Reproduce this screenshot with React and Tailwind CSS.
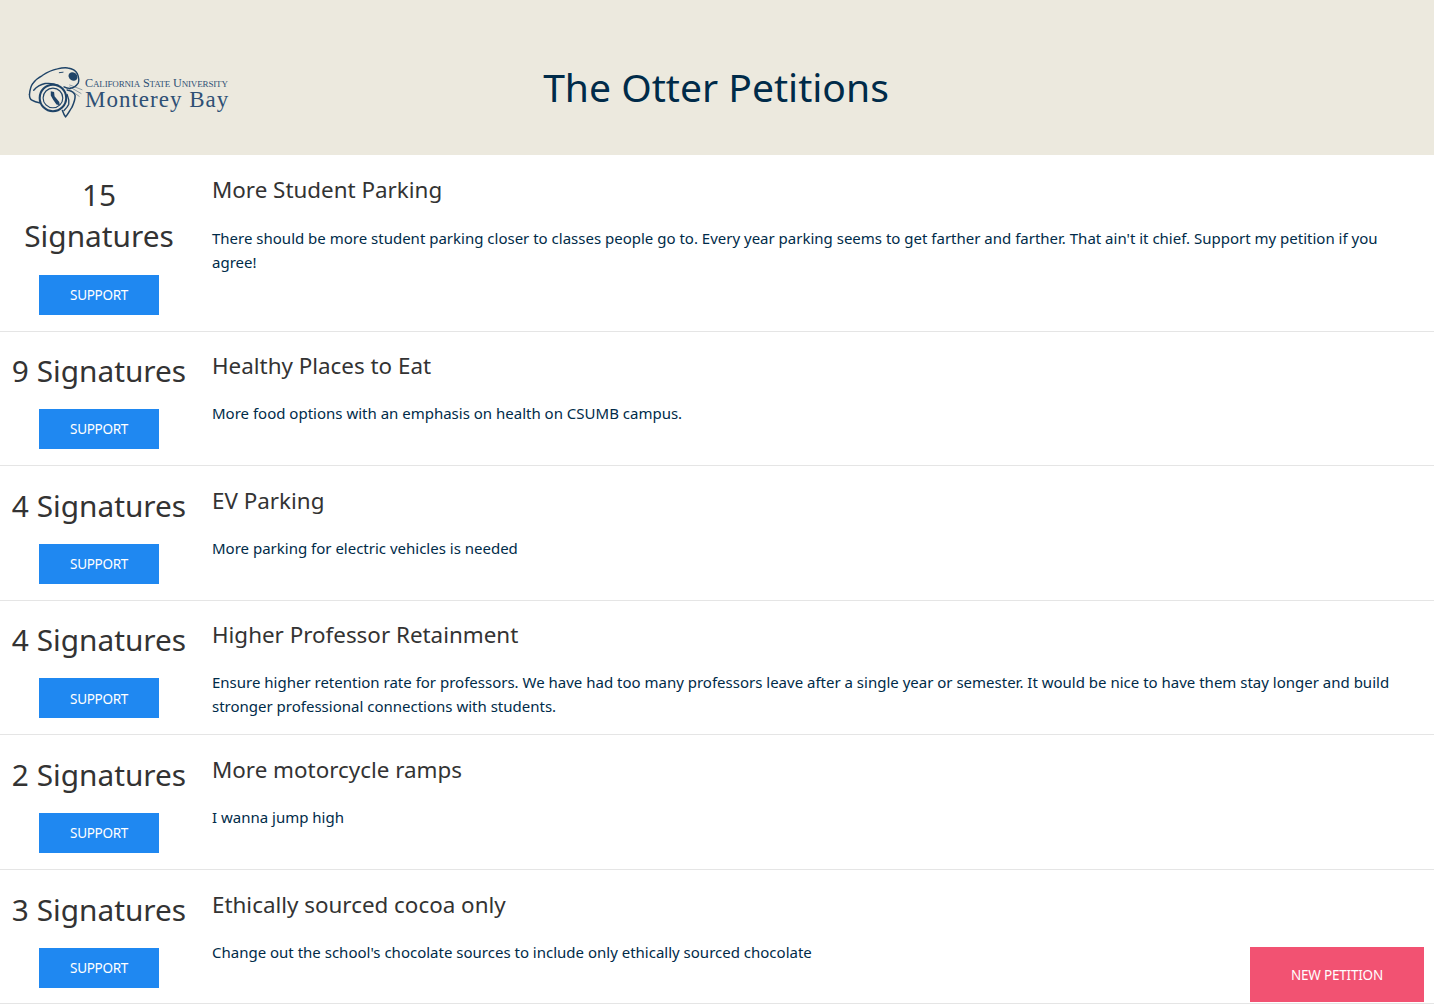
const petitions = [
  { count: '15', title: 'More Student Parking', body: "There should be more student parking closer to classes people go to. Every year parking seems to get farther and farther. That ain't it chief. Support my petition if you agree!", stack: true },
  { count: '9', title: 'Healthy Places to Eat', body: 'More food options with an emphasis on health on CSUMB campus.' },
  { count: '4', title: 'EV Parking', body: 'More parking for electric vehicles is needed' },
  { count: '4', title: 'Higher Professor Retainment', body: 'Ensure higher retention rate for professors. We have had too many professors leave after a single year or semester. It would be nice to have them stay longer and build stronger professional connections with students.' },
  { count: '2', title: 'More motorcycle ramps', body: 'I wanna jump high' },
  { count: '3', title: 'Ethically sourced cocoa only', body: "Change out the school's chocolate sources to include only ethically sourced chocolate" },
];

const Logo = () => (
  <div className="flex items-center">
    <svg className="ml-[2px] mt-[2px]" width="55" height="53" viewBox="0 0 58 56" fill="none" stroke="#1f4468" strokeLinecap="round" strokeLinejoin="round">
      <path d="M1.5 29C2 24 3 20 5 17.5C8 13 11 11 15 9C21 5 26 3 31 2C35 1 39 .5 42 1C46 1.5 50 3 52 7C53.5 10 54 14 53 17C51 20 48 22 45 22.5C42 23 40 22 38 21" strokeWidth="1.5" />
      <path d="M1.5 29C1.5 32 2 34 4 35C7 37 10 37.5 13 38M6 24.5C9 21 13 18.5 18 17.5C23 17 28 17.5 32 19.5" strokeWidth="1.5" />
      <ellipse cx="47.5" cy="10" rx="5" ry="4.2" fill="#1f4468" stroke="none" transform="rotate(35 47.5 10)" />
      <path d="M33 6L37 5.5" strokeWidth="1" />
      <path d="M44 19L57 24M44 21L56 28M43 23L54 31" strokeWidth="0.5" />
      <circle cx="26.3" cy="32.7" r="14" strokeWidth="2.2" />
      <circle cx="26.3" cy="32.7" r="10.4" strokeWidth="1.2" />
      <path d="M24 25.5L27.5 26.5L28 31L33 37L33.5 40.5L30 39.5L26.5 34.5L24 30Z" fill="#1f4468" stroke="none" />
      <path d="M41.3 24.3C45 25 49 27 49.7 30C50 35 48 39 46.3 42.7C44 46 42 50 39.7 52.7C38 51 37 48 36.3 46" strokeWidth="1.6" />
      <path d="M41.3 29C43 33 43.5 36 43 39.3C42 42 40 44 38 46" strokeWidth="1.4" />
    </svg>
    <div className="ml-[2px] mt-[1px] text-[#2f5075] font-['Liberation_Serif',serif]">
      <div className="text-[12.2px] leading-[12px] whitespace-nowrap [font-variant:small-caps] tracking-[-0.16px]">California State University</div>
      <div className="text-[23px] leading-[21px] whitespace-nowrap tracking-[1px]">Monterey Bay</div>
    </div>
  </div>
);

const Row = ({ count, title, body, stack }) => (
  <div className={`flex border-b border-[#e5e5e5] ${stack ? 'h-[176.6px]' : 'h-[134.59px]'}`}>
    <div className={`w-[198px] shrink-0 flex flex-col items-center ${stack ? 'pt-[19px]' : 'pt-[18.6px]'}`}>
      <div className="text-[29.8px] leading-[41px] text-[#333] text-center">
        {stack ? <>{count}<br />Signatures</> : `${count} Signatures`}
      </div>
      <button className={`w-[120px] h-[40px] pt-[0.8px] bg-[#1f88f1] text-white text-[13.5px] tracking-[-0.3px] ${stack ? 'mt-[19px]' : 'mt-[18px]'}`}>SUPPORT</button>
    </div>
    <div className="flex-1 pl-[14px] pr-[30px] pt-[16.7px]">
      <h2 className="text-[22.4px] leading-[36px] text-[#333]">{title}</h2>
      <p className={`text-[15px] leading-[24px] text-[#002b49] ${stack ? 'mt-[18px]' : 'mt-[17px]'}`}>{body}</p>
    </div>
  </div>
);

export default function App() {
  return (
    <div className="relative min-h-[1007px] bg-white font-['Noto_Sans',sans-serif] overflow-hidden">
      <header className="relative h-[155px] bg-[#ece9de] flex items-center pl-[26px]">
        <div className="mt-[30px]"><Logo /></div>
        <h1 className="absolute left-0 w-[1432px] top-[63px] text-center text-[39.1px] leading-[48px] text-[#002b49]">The Otter Petitions</h1>
      </header>
      {petitions.map((p) => <Row key={p.title} {...p} />)}
      <button className="absolute left-[1250px] top-[947px] w-[174px] h-[55px] pt-[1px] bg-[#f25272] text-white text-[13.5px] tracking-[-0.2px]">NEW PETITION</button>
    </div>
  );
}
